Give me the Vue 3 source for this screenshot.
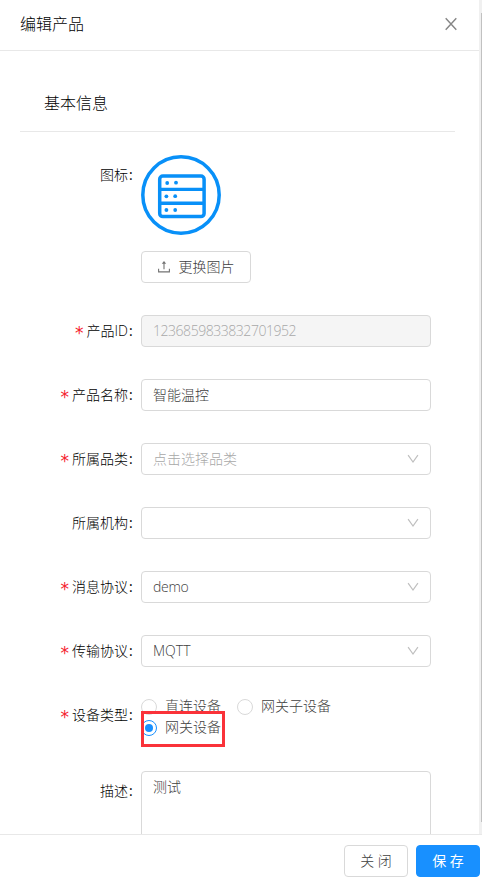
<script setup>
const fields = [
  { label: '产品ID', value: '1236859833832701952', required: true, disabled: true },
  { label: '产品名称', value: '智能温控', required: true },
  { label: '所属品类', value: '点击选择品类', required: true, select: true, placeholder: true },
  { label: '所属机构', value: '', select: true },
  { label: '消息协议', value: 'demo', required: true, select: true, latin: true },
  { label: '传输协议', value: 'MQTT', required: true, select: true },
]
</script>

<template>
  <div class="drawer">
    <header class="header">
      <span class="title">编辑产品</span>
      <svg class="close" width="12" height="14" viewBox="0 0 12 14" fill="none" stroke="#858585" stroke-width="1.4">
        <path d="M.7 1.2 11.3 12.8M11.3 1.2.7 12.8" />
      </svg>
    </header>

    <main class="body">
      <h2 class="section">基本信息</h2>

      <div class="row icon-row">
        <div class="label"><span>图标</span><i class="colon">:</i></div>
        <div class="control">
          <svg class="avatar" width="80" height="80" viewBox="0 0 80 80" fill="none" stroke="#0890f8">
            <circle cx="40" cy="40" r="38.2" stroke-width="3.5" />
            <rect x="18.7" y="21" width="44.4" height="40.6" rx="3.2" stroke-width="3.5" />
            <path d="M18 34.4h46M18 48.3h46" stroke-width="3.4" />
            <g fill="#0890f8" stroke="none">
              <circle cx="26.2" cy="28" r="1.9" /><circle cx="35" cy="27.7" r="1.9" />
              <circle cx="25.4" cy="41.3" r="1.9" /><circle cx="34.2" cy="41.2" r="1.9" />
              <circle cx="25.4" cy="55" r="1.9" /><circle cx="34.2" cy="55" r="1.9" />
            </g>
          </svg>
          <button class="btn upload">
            <svg width="12" height="12" viewBox="0 0 12 12" fill="none" stroke="#737373" stroke-width="1.1">
              <path d="M.6 7.7v3.2h10.8V7.7M6 8.3V1.5" />
              <path d="M6 0 8.2 2.8H3.8z" fill="#737373" stroke="none" />
            </svg>
            <span>更换图片</span>
          </button>
        </div>
      </div>

      <div v-for="f in fields" :key="f.label" class="row">
        <div class="label">
          <i v-if="f.required" class="star">*</i><span>{{ f.label }}</span><i class="colon">:</i>
        </div>
        <div class="input" :class="{ disabled: f.disabled, placeholder: f.placeholder, latin: f.latin }">
          <span>{{ f.value }}</span>
          <svg v-if="f.select" class="arrow" width="12" height="10" viewBox="0 0 12 10" fill="none" stroke="#bfbfbf" stroke-width="1.2">
            <path d="M1.1 1.2 6 8 10.9 1.2" />
          </svg>
        </div>
      </div>

      <div class="row type-row">
        <div class="label"><i class="star">*</i><span>设备类型</span><i class="colon">:</i></div>
        <div class="radios">
          <label class="radio"><i class="dot"></i><span>直连设备</span></label>
          <label class="radio"><i class="dot"></i><span>网关子设备</span></label>
          <label class="radio"><i class="dot checked"></i><span>网关设备</span></label>
          <div class="highlight"></div>
        </div>
      </div>

      <div class="row">
        <div class="label desc"><span>描述</span><i class="colon">:</i></div>
        <div class="textarea">测试</div>
      </div>
      <div class="scrollbar"><div class="thumb"></div></div>
    </main>

    <footer class="footer">
      <button class="btn">关 闭</button>
      <button class="btn primary">保 存</button>
    </footer>
  </div>
</template>

<style>
body {
  margin: 0;
  background: #fff;
  overflow: hidden;
}
</style>

<style scoped>
* {
  box-sizing: border-box;
}
.drawer {
  position: relative;
  display: flex;
  flex-direction: column;
  width: 482px;
  height: 882px;
  overflow: hidden;
  background: #fff;
  color: #000;
  font: 300 14px/22px "Open Sans", "Noto Sans CJK SC", sans-serif;
}
i {
  font-style: normal;
}
.header {
  flex: none;
  display: flex;
  justify-content: space-between;
  align-items: center;
  width: 479px;
  height: 51px;
  padding: 0 22px 3px 20px;
  border-bottom: 1px solid #e8e8e8;
  font-size: 16px;
}
.body {
  flex: 1;
  min-height: 0;
  overflow: hidden;
}
.section {
  width: 435px;
  height: 81px;
  margin: 0 0 23px 20px;
  padding: 40px 24px 0;
  border-bottom: 1px solid #e8e8e8;
  font-size: 16px;
  font-weight: inherit;
  line-height: 24px;
}
.row {
  display: grid;
  grid-template-columns: 133px 290px;
  column-gap: 8px;
  height: 32px;
  margin-bottom: 32px;
}
.icon-row {
  height: 128px;
}
.type-row {
  height: 40px;
}
.label {
  display: flex;
  justify-content: flex-end;
  align-items: center;
  height: 32px;
  white-space: nowrap;
}
.icon-row .label,
.desc {
  height: 40px;
}
.colon {
  width: 5px;
  padding-left: 1px;
  text-align: left;
  font-weight: 400;
}
.star {
  margin-right: 3px;
  padding-top: 4px;
  color: #f5222d;
  font-family: "DejaVu Sans", sans-serif;
  font-size: 17px;
  font-weight: 400;
}
.control {
  display: flex;
  flex-direction: column;
  align-items: flex-start;
  gap: 16px;
}
.btn {
  display: flex;
  align-items: center;
  justify-content: center;
  width: 64px;
  height: 32px;
  padding: 0;
  border: 1px solid #d9d9d9;
  border-radius: 4px;
  background: #fff;
  color: #404040;
  font: inherit;
}
.upload {
  width: 110px;
  gap: 9px;
}
.input {
  display: flex;
  align-items: center;
  justify-content: space-between;
  height: 32px;
  padding: 0 11px;
  border: 1px solid #d9d9d9;
  border-radius: 4px;
  color: #404040;
}
.disabled {
  background: #f5f5f5;
  color: #a8a8a8;
  letter-spacing: -0.46px;
}
.placeholder {
  color: #a8a8a8;
}
.latin {
  letter-spacing: -0.3px;
}
.radios {
  position: relative;
  display: flex;
  flex-wrap: wrap;
  align-content: flex-start;
  column-gap: 16px;
  margin-top: -4px;
  height: 43px;
  padding-right: 60px;
  color: #404040;
}
.radio {
  display: flex;
  align-items: center;
  gap: 8px;
  height: 21px;
}
.dot {
  display: flex;
  width: 16px;
  height: 16px;
  margin-top: 3px;
  border: 1px solid #d9d9d9;
  border-radius: 50%;
}
.checked {
  align-items: center;
  justify-content: center;
  border-color: #1890ff;
}
.checked::after {
  content: "";
  width: 8px;
  height: 8px;
  border-radius: 50%;
  background: #1890ff;
}
.highlight {
  position: absolute;
  left: 0;
  top: 16px;
  width: 84px;
  height: 36px;
  border: 3px solid #fa3239;
}
.textarea {
  height: 98px;
  padding: 4px 11px;
  border: 1px solid #d9d9d9;
  border-radius: 4px;
  color: #404040;
}
.scrollbar {
  position: absolute;
  top: 0;
  right: 0;
  width: 3px;
  height: 834px;
  padding: 13px 0 12px 2px;
  background: #f0f0f0;
}
.thumb {
  height: 100%;
  background: #c1c1c1;
}
.footer {
  position: relative;
  flex: none;
  display: flex;
  justify-content: flex-end;
  gap: 8px;
  height: 48px;
  padding: 10px 2px 0 0;
  border-top: 1px solid #e8e8e8;
  background: #fff;
}
.primary {
  border-color: #1890ff;
  background: #1890ff;
  color: #fff;
  font-weight: 400;
}
</style>
